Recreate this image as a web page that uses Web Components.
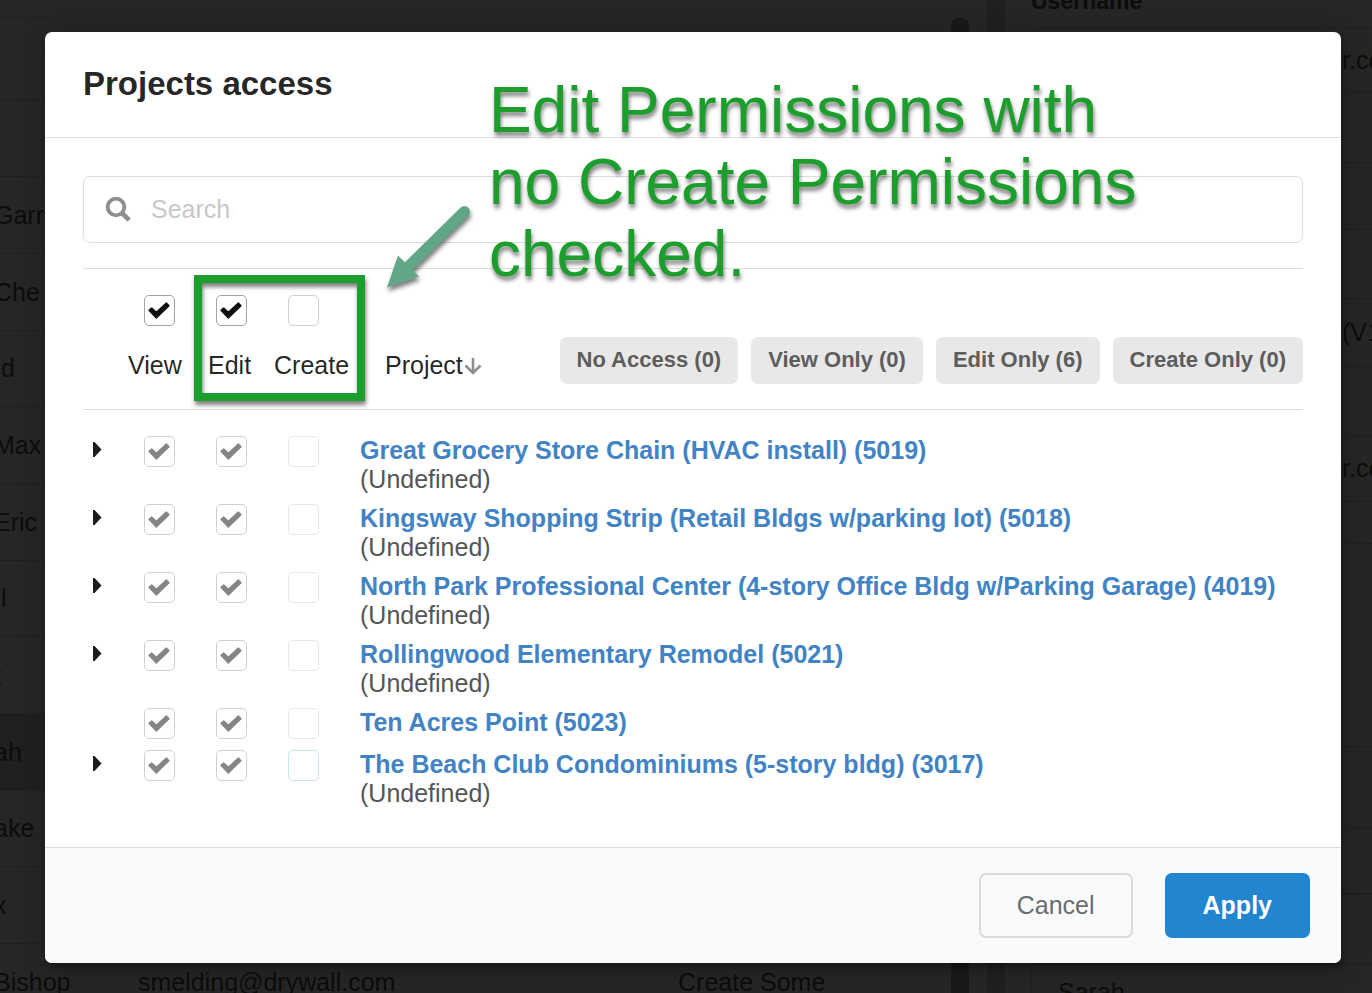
<!DOCTYPE html>
<html lang="en">
<head>
<meta charset="utf-8">
<meta name="viewport" content="width=device-width, initial-scale=1">
<title>Projects access</title>
<style>
  body {
    margin: 0;
    min-height: 100vh;
    overflow: hidden;
    background-color: #262626;
    color: rgba(0, 0, 0, 0.87);
    font-family: "Liberation Sans", Arial, sans-serif;
    font-size: 25px;
    line-height: 29px;
  }
</style>
</head>
<body>
<user-directory></user-directory>

<access-modal heading="Projects access">
  <search-field label="Search"></search-field>
  <permission-table></permission-table>
  <ui-button slot="actions">Cancel</ui-button>
  <ui-button slot="actions" primary>Apply</ui-button>
  <highlight-box slot="notes"></highlight-box>
  <note-arrow slot="notes"></note-arrow>
  <note-text slot="notes">Edit Permissions with<br>no Create Permissions<br>checked.</note-text>
</access-modal>

<script>
/**
 * Dimmed page that stays behind the modal
 */
class UserDirectory extends HTMLElement {
  constructor() {
    super();
    this._users = ['', '', '', 'Garr', 'Che', '\u00a0d', 'Max', 'Eric', '\u00a0l', 't', 'ah', 'ake', 'x', 'Bishop'];
    this._fields = [
      [65, 'r.com'], [70, ''], [67, ''], [69, ''], [68, '(V1)'], [69, ''], [66, 'r.com'], [42, ''],
      [203, ''], [81, ''], [66, '']
    ];
    this.attachShadow({ mode: 'open' });
    this.shadowRoot.innerHTML = `
      <style>
        :host {
          display: grid;
          grid-template-columns: minmax(0, 951fr) 18px 18px 18px minmax(0, 367fr);
          height: 100vh;
          overflow: hidden;
          color: #0c0c0c;
        }

        .user {
          display: grid;
          grid-template-columns: 138px 540px 1fr;
          align-items: center;
          box-sizing: border-box;
          height: 77px;
          border-top: 1px solid #202020;
        }

        .user:nth-child(3n) {
          height: 76px;
        }

        .user:first-child {
          height: 17px;
          border: 0;
        }

        .user:nth-child(2) {
          height: 83px;
        }

        .user.active {
          background-color: #202020;
        }

        .user span:first-child {
          margin-left: -6px;
        }

        .scroll {
          margin-top: 17px;
          border-radius: 9px 9px 0 0;
          background-color: #191919;
        }

        .divider {
          grid-column: 4;
          background-color: #202020;
        }

        .details {
          padding-left: 26px;
        }

        .details b {
          display: block;
          height: 27px;
          font-size: 23px;
          line-height: 2px;
        }

        .panel {
          border: 1px solid #202020;
          border-right: 0;
          border-radius: 8px 0 0 0;
        }

        .fields {
          margin-bottom: 68px;
        }

        .field {
          display: flex;
          align-items: center;
          box-sizing: border-box;
          padding-left: 310px;
          border-bottom: 1px solid #202020;
          white-space: nowrap;
        }

        .next {
          padding: 14px 26px;
        }
      </style>
      <div class="users"></div>
      <div class="scroll"></div>
      <div class="divider"></div>
      <div class="details">
        <b>Username</b>
        <div class="panel fields"></div>
        <div class="panel next">Sarah</div>
      </div>
    `;
  }

  connectedCallback() {
    this.shadowRoot.querySelector('.users').innerHTML = this._users.map((name, i) => {
      const last = i === this._users.length - 1;
      return `
        <div class="user${name === 'ah' ? ' active' : ''}">
          <span>${name}</span>
          <span>${last ? 'smelding@drywall.com' : ''}</span>
          <span>${last ? 'Create Some' : ''}</span>
        </div>
      `;
    }).join('');
    this.shadowRoot.querySelector('.fields').innerHTML = this._fields.map(([height, text]) => {
      return `<div class="field" style="height: ${height}px">${text}</div>`;
    }).join('');
  }
}

/**
 * Modal with header, content and a row of actions
 */
class AccessModal extends HTMLElement {
  constructor() {
    super();
    this.attachShadow({ mode: 'open' });
    this.shadowRoot.innerHTML = `
      <style>
        :host {
          display: block;
          position: absolute;
          top: 0;
          left: 0;
          right: 0;
          padding: 32px 31px 30px 45px;
        }

        section {
          position: relative;
          border-radius: 7px;
          background-color: #ffffff;
          box-shadow: 2px 5px 5px rgba(0, 0, 0, 0.2), 2px 5px 27px 4px rgba(0, 0, 0, 0.2);
        }

        header {
          padding: 31px 38px 33px;
          border-bottom: 1px solid #dededf;
        }

        h2 {
          margin: 0;
          font-size: 33px;
          line-height: 41px;
        }

        .content {
          padding: 38px 38px 29px;
        }

        footer {
          display: flex;
          justify-content: flex-end;
          gap: 32px;
          padding: 25px 31px;
          border-top: 1px solid #d9dadb;
          border-radius: 0 0 7px 7px;
          background-color: #f9fafc;
        }
      </style>
      <section role="dialog" aria-labelledby="heading">
        <header><h2 id="heading"></h2></header>
        <div class="content"><slot></slot></div>
        <footer><slot name="actions"></slot></footer>
        <slot name="notes"></slot>
      </section>
    `;
  }

  connectedCallback() {
    this.shadowRoot.querySelector('h2').textContent = this.getAttribute('heading');
  }
}

/**
 * Search input with a leading icon
 */
class SearchField extends HTMLElement {
  constructor() {
    super();
    this.attachShadow({ mode: 'open' });
    this.shadowRoot.innerHTML = `
      <style>
        :host {
          display: block;
          margin-bottom: 25px;
        }

        div {
          display: flex;
          align-items: center;
          gap: 19px;
          padding: 0 21px;
          border: 1px solid #dededf;
          border-radius: 7px;
        }

        label {
          display: flex;
        }

        input {
          flex: 1;
          min-width: 0;
          height: 65px;
          padding: 0;
          border: 0;
          outline: 0;
          background: none;
          color: inherit;
          font: inherit;
        }

        input::placeholder {
          color: #c8c8c8;
          opacity: 1;
        }
      </style>
      <div>
        <label for="query">
          <svg width="27" height="27" viewBox="0 0 27 27" fill="none" stroke="#8f8f8f">
            <circle cx="11" cy="11" r="8.3" stroke-width="3.8"/>
            <path d="M17.5 17.5l6.7 6.7" stroke-width="4.6"/>
          </svg>
        </label>
        <input id="query" type="text">
      </div>
    `;
  }

  connectedCallback() {
    const label = this.getAttribute('label');
    const input = this.shadowRoot.querySelector('input');
    input.placeholder = label;
    this.shadowRoot.querySelector('label').setAttribute('aria-label', label);
  }
}

/**
 * Tick box. Attributes: label, checked, muted, focused
 */
class CheckBox extends HTMLElement {
  constructor() {
    super();
    this.attachShadow({ mode: 'open' });
    this.shadowRoot.innerHTML = `
      <style>
        :host {
          display: inline-grid;
          vertical-align: top;
        }

        :host([muted]) {
          opacity: 0.5;
        }

        input,
        svg {
          grid-area: 1 / 1;
        }

        input {
          appearance: none;
          box-sizing: border-box;
          width: 31px;
          height: 31px;
          margin: 0;
          border: 1px solid #d0d0d1;
          border-radius: 5px;
          background-color: #ffffff;
        }

        input:checked {
          border-color: #a3a3a4;
        }

        :host([focused]) input {
          border-color: #96c8da;
        }

        svg {
          place-self: center;
          display: none;
          pointer-events: none;
        }

        input:checked + svg {
          display: block;
        }
      </style>
      <input type="checkbox">
      <svg width="22" height="17" viewBox="0 0 66 51" fill="#0d0d0d" stroke="#0d0d0d" stroke-width="4" stroke-linejoin="round">
        <path d="M3 25L11 18L25 31L55 3L63 11L25 48z"/>
      </svg>
    `;
  }

  connectedCallback() {
    const input = this.shadowRoot.querySelector('input');
    input.checked = this.hasAttribute('checked');
    input.setAttribute('aria-label', this.getAttribute('label'));
  }
}

/**
 * Small grey filter button
 */
class FilterChip extends HTMLElement {
  constructor() {
    super();
    this.attachShadow({ mode: 'open' });
    this.shadowRoot.innerHTML = `
      <style>
        :host {
          display: block;
        }

        button {
          padding: 10px 17px 12px;
          border: 0;
          border-radius: 7px;
          background-color: #e8e8e8;
          color: #5d5d5d;
          font: bold 22px/25px "Liberation Sans", Arial, sans-serif;
          white-space: nowrap;
        }
      </style>
      <button type="button"><slot></slot></button>
    `;
  }
}

/**
 * Footer button, blue when primary
 */
class UiButton extends HTMLElement {
  constructor() {
    super();
    this.attachShadow({ mode: 'open' });
    this.shadowRoot.innerHTML = `
      <style>
        :host {
          display: block;
        }

        button {
          padding: 16px 36px;
          border: 2px solid #d9dadc;
          border-radius: 7px;
          background: none;
          color: #6b6c6d;
          font: inherit;
        }

        :host([primary]) button {
          border-color: #2185d0;
          background-color: #2185d0;
          color: #ffffff;
          font-weight: bold;
        }
      </style>
      <button type="button"><slot></slot></button>
    `;
  }
}

/**
 * Table of projects with view / edit / create rights
 */
class PermissionTable extends HTMLElement {
  constructor() {
    super();
    this._projects = [
      { name: 'Great Grocery Store Chain (HVAC install) (5019)', group: '(Undefined)' },
      { name: 'Kingsway Shopping Strip (Retail Bldgs w/parking lot) (5018)', group: '(Undefined)' },
      { name: 'North Park Professional Center (4-story Office Bldg w/Parking Garage) (4019)', group: '(Undefined)' },
      { name: 'Rollingwood Elementary Remodel (5021)', group: '(Undefined)' },
      { name: 'Ten Acres Point (5023)' },
      { name: 'The Beach Club Condominiums (5-story bldg) (3017)', group: '(Undefined)', focused: true }
    ];
    this.attachShadow({ mode: 'open' });
    this.shadowRoot.innerHTML = `
      <style>
        :host {
          display: block;
        }

        table {
          width: 100%;
          table-layout: fixed;
          border-collapse: separate;
          border-spacing: 0;
        }

        col.toggle {
          width: 40px;
        }

        col.right {
          width: 72px;
        }

        th,
        td {
          padding: 0;
          font-weight: normal;
          text-align: left;
          vertical-align: top;
        }

        .boxes td {
          padding-top: 26px;
          border-top: 1px solid #dededf;
          text-align: center;
        }

        .names th {
          height: 84px;
          padding-top: 25px;
          border-bottom: 1px solid #dededf;
          box-sizing: border-box;
          white-space: nowrap;
        }

        .names .view {
          padding-left: 5px;
        }

        .names .edit {
          padding-left: 13px;
        }

        .names .create {
          padding-left: 7px;
        }

        .names .project {
          padding-top: 11px;
          padding-left: 46px;
        }

        .bar {
          display: flex;
          justify-content: space-between;
        }

        .sort {
          display: flex;
          align-items: center;
          margin-top: 14px;
          height: 29px;
        }

        .filters {
          display: flex;
          gap: 13px;
        }

        tbody td {
          height: 32px;
          padding-bottom: 10px;
          text-align: center;
        }

        tbody tr:first-child td {
          padding-top: 26px;
        }

        tbody td:first-child {
          text-align: left;
        }

        tbody td.name {
          padding-left: 21px;
          text-align: left;
        }

        .toggle button {
          display: flex;
          padding: 6px 10px;
          border: 0;
          background: none;
        }

        a {
          color: #4183c4;
          font-weight: bold;
          text-decoration: none;
        }

        small {
          display: block;
          color: #555555;
          font-size: 25px;
        }
      </style>
      <table>
        <colgroup>
          <col class="toggle"><col class="right"><col class="right"><col class="right"><col>
        </colgroup>
        <thead>
          <tr class="boxes">
            <td></td>
            <td><check-box label="View all" checked></check-box></td>
            <td><check-box label="Edit all" checked></check-box></td>
            <td><check-box label="Create all"></check-box></td>
            <td></td>
          </tr>
          <tr class="names">
            <th></th>
            <th class="view" scope="col">View</th>
            <th class="edit" scope="col">Edit</th>
            <th class="create" scope="col">Create</th>
            <th class="project" scope="col">
              <div class="bar">
                <span class="sort">Project<svg width="20" height="18" viewBox="0 0 20 18" fill="none" stroke="#8f8f8f" stroke-width="2.6">
                  <path d="M10 1v15M2.500 8.500L10 16l7.500-7.500"/>
                </svg></span>
                <div class="filters">
                  <filter-chip>No Access (0)</filter-chip>
                  <filter-chip>View Only (0)</filter-chip>
                  <filter-chip>Edit Only (6)</filter-chip>
                  <filter-chip>Create Only (0)</filter-chip>
                </div>
              </div>
            </th>
          </tr>
        </thead>
        <tbody></tbody>
      </table>
    `;
  }

  connectedCallback() {
    this._render();
  }

  _render() {
    const body = this.shadowRoot.querySelector('tbody');
    body.innerHTML = this._projects.map(project => this._renderRow(project)).join('');
  }

  _renderRow({ name, group, focused }) {
    const toggle = `
      <button type="button" aria-label="Expand">
        <svg width="9" height="15" viewBox="0 0 9 15" fill="#1b1c1d"><path d="M0 0h1.500L8.500 7.500L1.500 15H0z"/></svg>
      </button>
    `;
    return `
      <tr>
        <td class="toggle">${group ? toggle : ''}</td>
        <td><check-box label="View" checked muted></check-box></td>
        <td><check-box label="Edit" checked muted></check-box></td>
        <td><check-box label="Create" muted ${focused ? 'focused' : ''}></check-box></td>
        <td class="name">
          <a href="#">${name}</a>
          ${group ? `<small>${group}</small>` : ''}
        </td>
      </tr>
    `;
  }
}

/**
 * Notes that lie over the modal
 */
class HighlightBox extends HTMLElement {
  constructor() {
    super();
    this.attachShadow({ mode: 'open' });
    this.shadowRoot.innerHTML = `
      <style>
        :host {
          position: absolute;
          top: 243px;
          left: 149px;
          box-sizing: border-box;
          width: 171px;
          height: 126px;
          border: 8px solid #1b9e2c;
          filter: drop-shadow(1px 4px 2px rgba(0, 0, 0, 0.5));
          pointer-events: none;
        }
      </style>
    `;
  }
}

class NoteArrow extends HTMLElement {
  constructor() {
    super();
    this.attachShadow({ mode: 'open' });
    this.shadowRoot.innerHTML = `
      <style>
        :host {
          position: absolute;
          top: 168px;
          left: 335px;
          filter: drop-shadow(1px 4px 2px rgba(0, 0, 0, 0.5));
          pointer-events: none;
        }

        svg {
          display: block;
        }
      </style>
      <svg width="100" height="100" viewBox="0 0 100 100">
        <path d="M29 66L84.500 11.500" stroke="#62a688" stroke-width="11" stroke-linecap="round"/>
        <path d="M7 87.500L18 55.500L39 76.500z" fill="#62a688"/>
      </svg>
    `;
  }
}

class NoteText extends HTMLElement {
  constructor() {
    super();
    this.attachShadow({ mode: 'open' });
    this.shadowRoot.innerHTML = `
      <style>
        :host {
          position: absolute;
          top: 42px;
          left: 444px;
          color: #1b9e2c;
          font-size: 64px;
          line-height: 72px;
          text-shadow: 1px 4px 4px rgba(0, 0, 0, 0.5);
          white-space: nowrap;
          pointer-events: none;
        }
      </style>
      <slot></slot>
    `;
  }
}

customElements.define('user-directory', UserDirectory);
customElements.define('access-modal', AccessModal);
customElements.define('search-field', SearchField);
customElements.define('check-box', CheckBox);
customElements.define('filter-chip', FilterChip);
customElements.define('ui-button', UiButton);
customElements.define('permission-table', PermissionTable);
customElements.define('highlight-box', HighlightBox);
customElements.define('note-arrow', NoteArrow);
customElements.define('note-text', NoteText);
</script>
</body>
</html>
